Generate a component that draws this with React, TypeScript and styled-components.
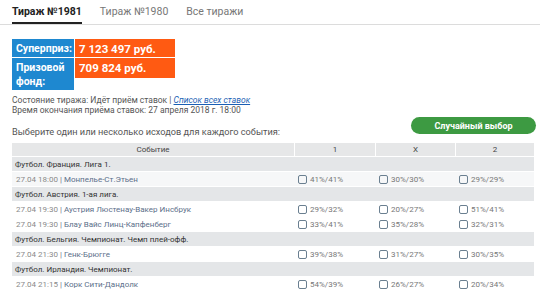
import React from "react"
import styled, { createGlobalStyle, css } from "styled-components"

const Global = createGlobalStyle`
	body {
		margin: 0;
		background: #fff;
		font-family: Roboto, "Liberation Sans", sans-serif;
		color: #555;
	}
`

const Page = styled.div`
	width: 540px;
	height: 298px;
	overflow: hidden;
`

const Tabs = styled.div`
	display: flex;
	gap: 18px;
	padding-left: 12px;
	height: 24px;
	border-bottom: 1px solid #dcdcdc;
`

const Tab = styled.div<{ $active?: boolean }>`
	display: flex;
	align-items: center;
	height: 22px;
	font-size: 10.5px;
	color: #777;
	${(p) =>
		p.$active &&
		css`
			font-weight: bold;
			color: #222;
			border-bottom: 2px solid #222;
		`}
`

const Content = styled.div`
	padding: 14px 4px 0 12px;
`

const Prize = styled.div`
	display: grid;
	grid-template-columns: 62px 100px;
	grid-gap: 1px;
	width: 163px;
`

const PrizeCell = styled.div<{ $kind: "label" | "value"; $h: number }>`
	height: ${(p) => p.$h}px;
	padding: 3px 0 0 4px;
	box-sizing: border-box;
	font-size: ${(p) => (p.$kind === "label" ? "10.5px" : "11.5px")};
	font-weight: bold;
	line-height: 14px;
	color: #fff;
	background: ${(p) => (p.$kind === "label" ? "#1e88d0" : "#ff5a12")};
	align-self: start;
	white-space: nowrap;
`

const Status = styled.div`
	margin-top: 6px;
	font-size: 8.5px;
	line-height: 9.5px;
	color: #555;
`

const Link = styled.a`
	color: #1a5fb4;
	font-style: italic;
	text-decoration: underline;
`

const ChooseRow = styled.div`
	display: flex;
	justify-content: space-between;
	align-items: flex-start;
	margin-top: 2px;
`

const Hint = styled.div`
	font-size: 9.2px;
	color: #555;
	padding-top: 9px;
`

const RandomBtn = styled.button`
	width: 125px;
	height: 17px;
	border: none;
	border-radius: 9px;
	background: #3d9a42;
	color: #fff;
	font-family: Roboto, "Liberation Sans", sans-serif;
	font-weight: bold;
	font-size: 9px;
	padding: 0;
`

const Table = styled.div`
	margin-top: 6px;
	width: 522px;
	display: grid;
	grid-template-columns: 282px 81px 80px 79px;
	font-size: 8px;
`

const Head = styled.div`
	height: 13px;
	display: flex;
	align-items: center;
	justify-content: center;
	background: #e6e7e8;
	color: #444;
	border-left: 1px solid #fff;
	&:first-child {
		border-left: none;
	}
`

const Category = styled.div`
	grid-column: 1 / -1;
	height: 14px;
	display: flex;
	align-items: center;
	padding-left: 3px;
	background: #e4e6e8;
	color: #333;
	border-top: 1px solid #fff;
`

const Cell = styled.div<{ $shade?: boolean }>`
	height: 14px;
	display: flex;
	align-items: center;
	padding-left: 4px;
	background: ${(p) => (p.$shade ? "#f6f7f8" : "#fff")};
	color: #777;
	border-top: 1px solid #fff;
`

const Date = styled.span`
	color: #8a8a8a;
`

const Team = styled.span`
	color: #5c6f8a;
`

const Box = styled.span`
	width: 7px;
	height: 7px;
	border: 1px solid #6a7f90;
	border-radius: 2px;
	margin-right: 3px;
`

type Ev = { time: string; name: string; odds: string[]; shade?: boolean }
type Group = { title: string; events: Ev[] }

const groups: Group[] = [
	{
		title: "Футбол. Франция. Лига 1.",
		events: [
			{ time: "27.04 18:00", name: "Монпелье-Ст.Этьен", odds: ["41%/41%", "30%/30%", "29%/29%"], shade: true },
		],
	},
	{
		title: "Футбол. Австрия. 1-ая лига.",
		events: [
			{ time: "27.04 19:30", name: "Аустрия Люстенау-Вакер Инсбрук", odds: ["29%/32%", "20%/27%", "51%/41%"] },
			{ time: "27.04 19:30", name: "Блау Вайс Линц-Капфенберг", odds: ["33%/41%", "35%/28%", "32%/31%"] },
		],
	},
	{
		title: "Футбол. Бельгия. Чемпионат. Чемп плей-офф.",
		events: [{ time: "27.04 21:30", name: "Генк-Брюгге", odds: ["39%/38%", "31%/27%", "30%/35%"] }],
	},
	{
		title: "Футбол. Ирландия. Чемпионат.",
		events: [{ time: "27.04 21:15", name: "Корк Сити-Дандолк", odds: ["54%/39%", "26%/27%", "20%/34%"] }],
	},
]

export default function App() {
	return (
		<Page>
			<Global />
			<Tabs>
				<Tab $active>Тираж №1981</Tab>
				<Tab>Тираж №1980</Tab>
				<Tab>Все тиражи</Tab>
			</Tabs>
			<Content>
				<Prize>
					<PrizeCell $kind="label" $h={18}>Суперприз:</PrizeCell>
					<PrizeCell $kind="value" $h={18}>7 123 497 руб.</PrizeCell>
					<PrizeCell $kind="label" $h={32}>
						Призовой
						<br />
						фонд:
					</PrizeCell>
					<PrizeCell $kind="value" $h={20}>709 824 руб.</PrizeCell>
				</Prize>
				<Status>
					Состояние тиража: Идёт приём ставок | <Link>Список всех ставок</Link>
					<br />
					Время окончания приёма ставок: 27 апреля 2018 г. 18:00
				</Status>
				<ChooseRow>
					<Hint>Выберите один или несколько исходов для каждого события:</Hint>
					<RandomBtn>Случайный выбор</RandomBtn>
				</ChooseRow>
				<Table>
					<Head>Событие</Head>
					<Head>1</Head>
					<Head>X</Head>
					<Head>2</Head>
					{groups.map((g) => (
						<React.Fragment key={g.title}>
							<Category>{g.title}</Category>
							{g.events.map((e) => (
								<React.Fragment key={e.name}>
									<Cell $shade={e.shade}>
										<Date>{e.time}</Date>
										&nbsp;<Team>| {e.name}</Team>
									</Cell>
									{e.odds.map((o, i) => (
										<Cell key={i} $shade={e.shade}>
											<Box />
											{o}
										</Cell>
									))}
								</React.Fragment>
							))}
						</React.Fragment>
					))}
				</Table>
			</Content>
		</Page>
	)
}
